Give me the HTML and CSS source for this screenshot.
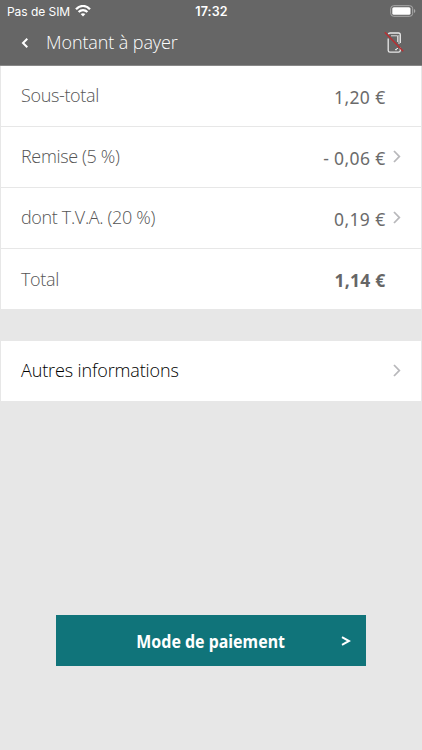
FILE: index.html
```html
<!DOCTYPE html>
<html lang="fr">
<head>
<meta charset="utf-8">
<meta name="viewport" content="width=device-width">
<title>Montant à payer</title>
<link rel="stylesheet" href="styles.css">
</head>
<body>
<header class="header">
  <div class="status">
    <div class="carrier"><span>Pas de SIM</span>
      <svg width="16" height="12" viewBox="0 0 16 12" fill="none" stroke="#fff" stroke-width="2.2"><path d="M1 4.3C5-.2 11-.2 15 4.3M3.6 7.1c2.6-2.7 6.2-2.7 8.8 0"/><path d="M8 11.5 5.6 9.1Q8 7.2 10.4 9.1Z" fill="#fff" stroke="none"/></svg>
    </div>
    <span class="clock">17:32</span>
    <svg class="battery" width="26" height="12" viewBox="0 0 26 12"><rect x=".7" y=".7" width="22" height="10.6" rx="3" fill="none" stroke="#aaa"/><rect x="2.3" y="2.2" width="18.2" height="7.6" rx="1.5" fill="#fff"/><path d="M24 4v4q1.3-.5 1.3-2T24 4Z" fill="#aaa"/></svg>
  </div>
  <div class="nav">
    <svg class="back" width="8" height="12" viewBox="0 0 8 12" fill="none" stroke="#fff" stroke-width="2"><path d="M6.3 1.8 2 6l4.3 4.2"/></svg>
    <h1 class="title">Montant à payer</h1>
    <svg class="device" width="22" height="24" viewBox="0 0 22 24" fill="none"><path d="M4.5 3.2Q4.5 2 6 2h8.5q1.8 0 1.8 2v8M4.2 7.5v12Q4.2 21.2 6 21.2h8.5q1.8 0 1.8-1.8v-3" stroke="#e8e8e8" stroke-width="1.3"/><path d="M7 4.8h6.6V11" stroke="#ddd"/><path d="M15 4v9" stroke="#aaa" stroke-width="1.8"/><path d="M11 18.7h2M12.5 17.5h1.5" stroke="#eee"/><path d="m.8 1.3 18.4 19" stroke="#b92f32" stroke-width="1.5"/></svg>
  </div>
</header>
<main class="content">
  <section class="list">
    <div class="row"><span class="label subtotal">Sous-total</span><span class="value">1,20 €</span></div>
    <div class="row"><span class="label discount">Remise (5 %)</span><span class="value">- 0,06 €</span><svg class="chevron" width="8" height="13" viewBox="0 0 8 13"><path d="m1 1 5.3 5.5L1 12"/></svg></div>
    <div class="row"><span class="label vat">dont T.V.A. (20 %)</span><span class="value">0,19 €</span><svg class="chevron" width="8" height="13" viewBox="0 0 8 13"><path d="m1 1 5.3 5.5L1 12"/></svg></div>
    <div class="row"><span class="label total">Total</span><span class="value strong">1,14 €</span></div>
  </section>
  <section class="list more">
    <div class="row"><span class="label info">Autres informations</span><svg class="chevron" width="8" height="13" viewBox="0 0 8 13"><path d="m1 1 5.3 5.5L1 12"/></svg></div>
  </section>
  <button class="pay"><span class="pay-label">Mode de paiement</span><svg class="pay-arrow" width="10" height="10" viewBox="0 0 10 10"><path d="M1 1.2 8 5 1 8.8" fill="none" stroke="#fff" stroke-width="2"/></svg></button>
</main>
</body>
</html>
```
FILE: styles.css
```css
* { box-sizing: border-box; }
body {
  margin: 0;
  height: 750px;
  background: #e7e7e7;
  font-family: "Open Sans", sans-serif;
  overflow: hidden;
}
svg { display: block; flex: none; }
.header { height: 66px; background: #666; border-bottom: 1px solid #888; color: #fff; }
.status {
  height: 22px;
  display: grid;
  grid-template-columns: 1fr auto 1fr;
  align-items: center;
  padding: 0 6px 0 7px;
  font-family: Inter, sans-serif;
  font-size: 12px;
}
.carrier { display: flex; align-items: center; gap: 5px; letter-spacing: -.05px; }
.carrier svg { margin-top: -1px; }
.clock { font-weight: 600; font-size: 12.5px; letter-spacing: .1px; }
.battery { justify-self: end; margin-top: -1px; }
.nav { height: 43px; display: flex; align-items: center; padding: 0 16px 2px 21px; }
.title { margin: -2px auto 0 17px; font-size: 18px; line-height: 24px; font-weight: 300; letter-spacing: -.1px; color: #fff; white-space: nowrap; }
.list { margin: 0 1px; background: #fff; }
.row { height: 61px; display: flex; align-items: center; padding: 0 20px; border-bottom: 1px solid #e7e7e7; position: relative; }
.row:last-child { height: 60px; border-bottom: 0; }
.label { margin-top: -2px; font-size: 18px; line-height: 24px; font-weight: 300; letter-spacing: -.35px; color: #555; white-space: nowrap; }
.value { margin: 2px 15.5px 0 auto; font-family: "Noto Sans", sans-serif; font-size: 17.5px; line-height: 24px; letter-spacing: .35px; color: #6b6b6b; white-space: nowrap; }
.strong { font-weight: 700; letter-spacing: .25px; color: #666; }
.total { margin-top: 0; }
.chevron { position: absolute; right: 20px; top: 23px; fill: none; stroke: #b8b8bb; stroke-width: 1.8; }
.more { margin-top: 32px; }
.info { letter-spacing: -.13px; color: #000; }
.pay {
  position: relative;
  display: flex;
  align-items: center;
  justify-content: center;
  width: 310px;
  height: 51px;
  margin: 214px 0 0 56px;
  padding: 0;
  border: 0;
  background: #10747a;
  color: #fff;
  font: 700 17.5px/24px "Noto Sans", sans-serif;
}
.pay-label { transform: scaleX(.91); }
.pay-arrow { position: absolute; right: 15px; top: 21px; }
```
